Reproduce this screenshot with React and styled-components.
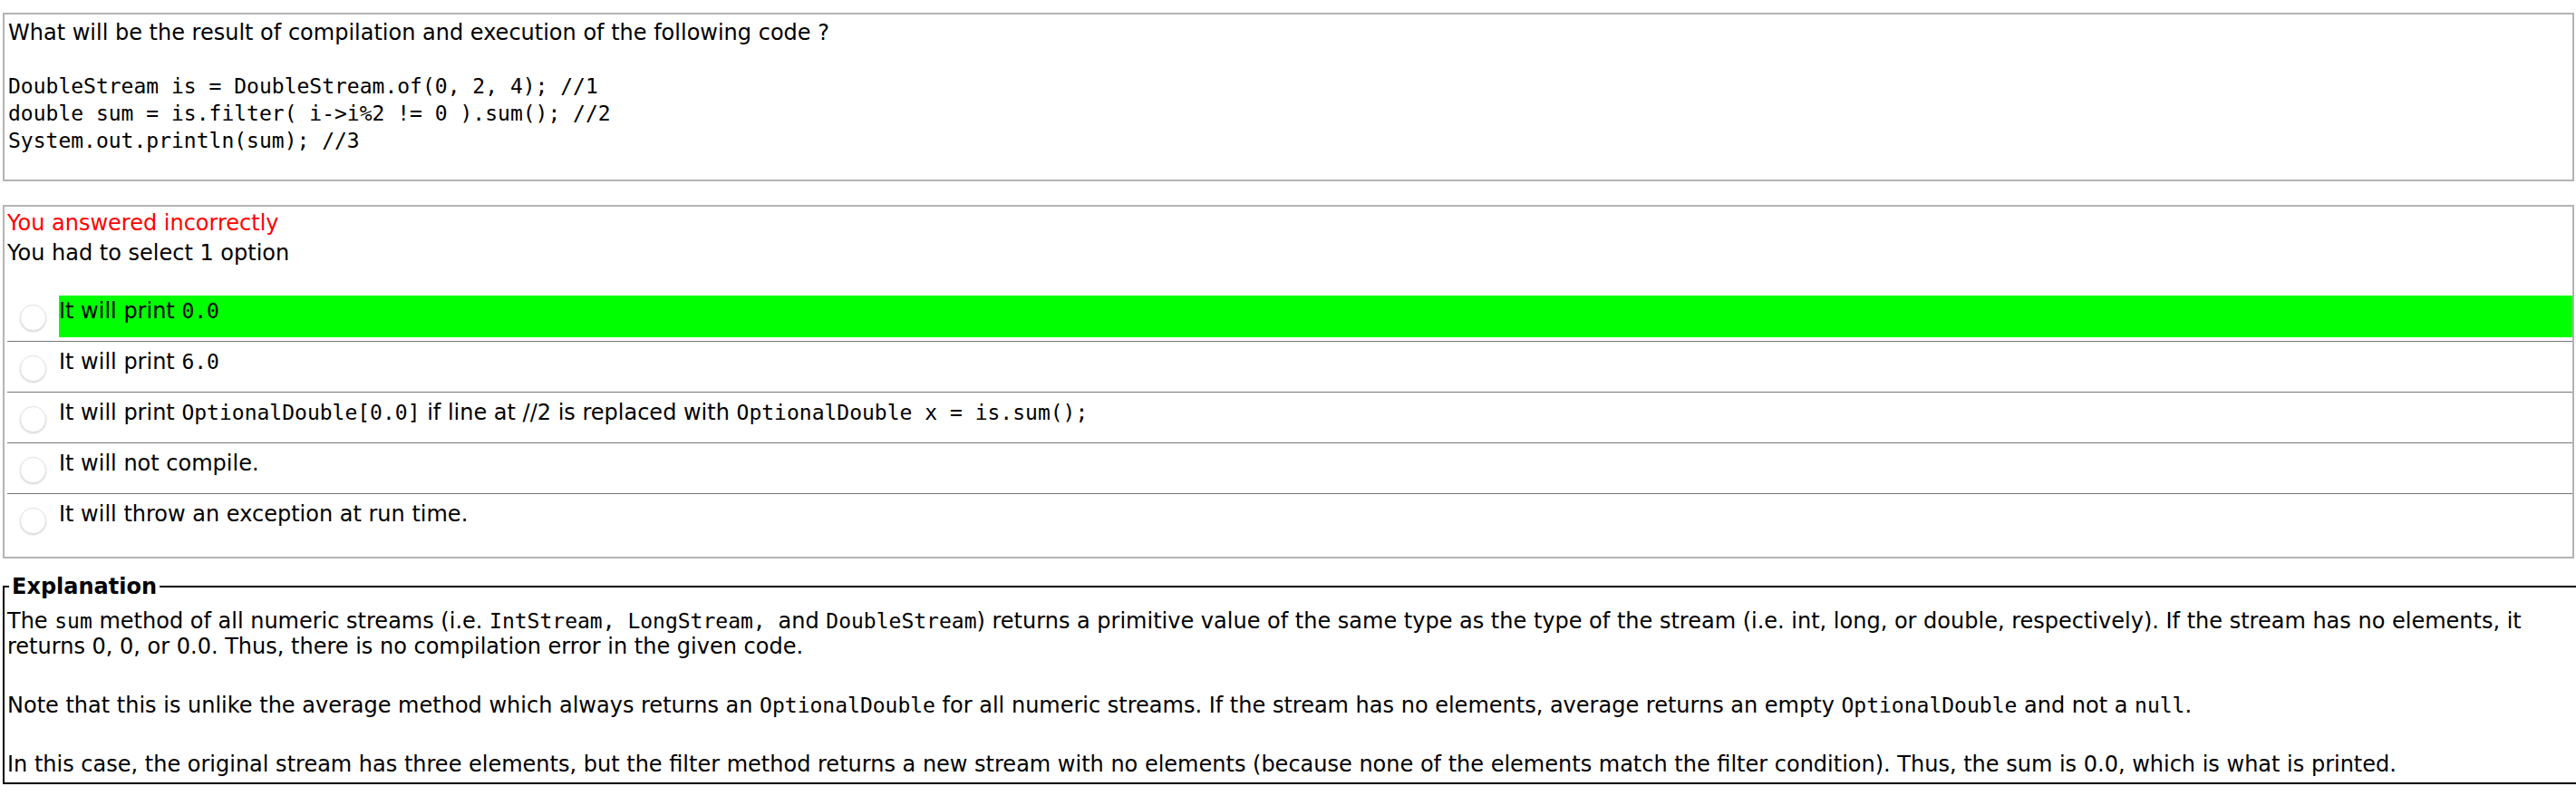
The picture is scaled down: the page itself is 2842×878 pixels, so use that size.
import React from 'react';
import styled, { createGlobalStyle } from 'styled-components';

const GlobalStyle = createGlobalStyle`
    html, body {
        margin: 0;
        padding: 0;
        background: #fff;
        overflow: hidden;
    }
    body {
        font-family: "DejaVu Sans", Verdana, sans-serif;
        font-size: 24px;
        color: #000;
    }
`;

const Page = styled.div`
    padding: 14px 2px 0 3px;
`;

const Box = styled.div`
    border: 2px solid #b4b4b4;
`;

const QuestionBox = styled(Box)`
    padding: 5px 4px 0;
`;

const Prompt = styled.div`
    line-height: 30px;
`;

const Code = styled.pre`
    margin: 29px 0 28px;
    font-family: "DejaVu Sans Mono", monospace;
    font-size: 23px;
    line-height: 30px;
    white-space: pre;
`;

const AnswerBox = styled(Box)`
    margin-top: 26px;
    padding: 2px 0 14px 3px;
`;

const StatusLine = styled.div`
    line-height: 33px;
    color: ${p => (p.$wrong ? '#ff0000' : '#000')};
`;

const OptionList = styled.div`
    margin-top: 25px;
`;

const OptionRow = styled.div`
    display: flex;
    align-items: flex-start;
    padding: 5px 0 4px;
    border-bottom: 1px solid #777;

    &:last-child {
        border-bottom: none;
    }
`;

const Radio = styled.span`
    flex: none;
    width: 27px;
    height: 27px;
    margin: 10px 0 0 14px;
    border-radius: 50%;
    background: #fff;
    border: 1px solid #e4e4e4;
    box-shadow: 0 1px 2px rgba(0, 0, 0, 0.18);
`;

const OptionLabel = styled.div`
    flex: 1;
    margin-left: 14px;
    padding: 3px 0 15px;
    line-height: 28px;
    background: ${p => (p.$correct ? '#00ff00' : 'transparent')};
`;

const Mono = styled.code`
    font-family: "DejaVu Sans Mono", monospace;
    font-size: 23px;
    line-height: 1;
    white-space: pre;
`;

const Fieldset = styled.fieldset`
    margin: 17px -2px 0 0;
    padding: 0 6px 5px 3px;
    border: 2px solid #000;
    border-right: none;
    min-width: 0;
`;

const Legend = styled.legend`
    margin-left: 2px;
    padding: 0 3px;
    font-weight: bold;
    line-height: 28px;
`;

const ExplanationBody = styled.div`
    margin-top: 10px;
    line-height: 28.3px;
`;

const Para = styled.p`
    margin: 0;

    & + & {
        margin-top: 36.7px;
    }
`;

const options = [
    { id: 1, correct: true, text: <>It will print <Mono>0.0</Mono></> },
    { id: 2, text: <>It will print <Mono>6.0</Mono></> },
    {
        id: 3,
        text: (
            <>
                It will print <Mono>OptionalDouble[0.0]</Mono> if line at //2 is replaced with{' '}
                <Mono>OptionalDouble x = is.sum();</Mono>
            </>
        ),
    },
    { id: 4, text: <>It will not compile.</> },
    { id: 5, text: <>It will throw an exception at run time.</> },
];

const code = `DoubleStream is = DoubleStream.of(0, 2, 4); //1
double sum = is.filter( i->i%2 != 0 ).sum(); //2
System.out.println(sum); //3`;

const App = () => {
    return (
        <Page>
            <GlobalStyle />
            <QuestionBox>
                <Prompt>What will be the result of compilation and execution of the following code ?</Prompt>
                <Code>{code}</Code>
            </QuestionBox>

            <AnswerBox>
                <StatusLine $wrong>You answered incorrectly</StatusLine>
                <StatusLine>You had to select 1 option</StatusLine>
                <OptionList>
                    {options.map(opt => (
                        <OptionRow key={opt.id}>
                            <Radio />
                            <OptionLabel $correct={opt.correct}>{opt.text}</OptionLabel>
                        </OptionRow>
                    ))}
                </OptionList>
            </AnswerBox>

            <Fieldset>
                <Legend>Explanation</Legend>
                <ExplanationBody>
                    <Para>
                        The <Mono>sum</Mono> method of all numeric streams (i.e. <Mono>IntStream, </Mono>
                        <Mono>LongStream, </Mono>and <Mono>DoubleStream</Mono>) returns a primitive value of the
                        same type as the type of the stream (i.e. int, long, or double, respectively). If the stream
                        has no elements, it returns 0, 0, or 0.0. Thus, there is no compilation error in the given
                        code.
                    </Para>
                    <Para>
                        Note that this is unlike the average method which always returns an{' '}
                        <Mono>OptionalDouble</Mono> for all numeric streams. If the stream has no elements, average
                        returns an empty <Mono>OptionalDouble</Mono> and not a <Mono>null</Mono>.
                    </Para>
                    <Para>
                        In this case, the original stream has three elements, but the filter method returns a new
                        stream with no elements (because none of the elements match the filter condition). Thus, the
                        sum is 0.0, which is what is printed.
                    </Para>
                </ExplanationBody>
            </Fieldset>
        </Page>
    );
};

export default App;
